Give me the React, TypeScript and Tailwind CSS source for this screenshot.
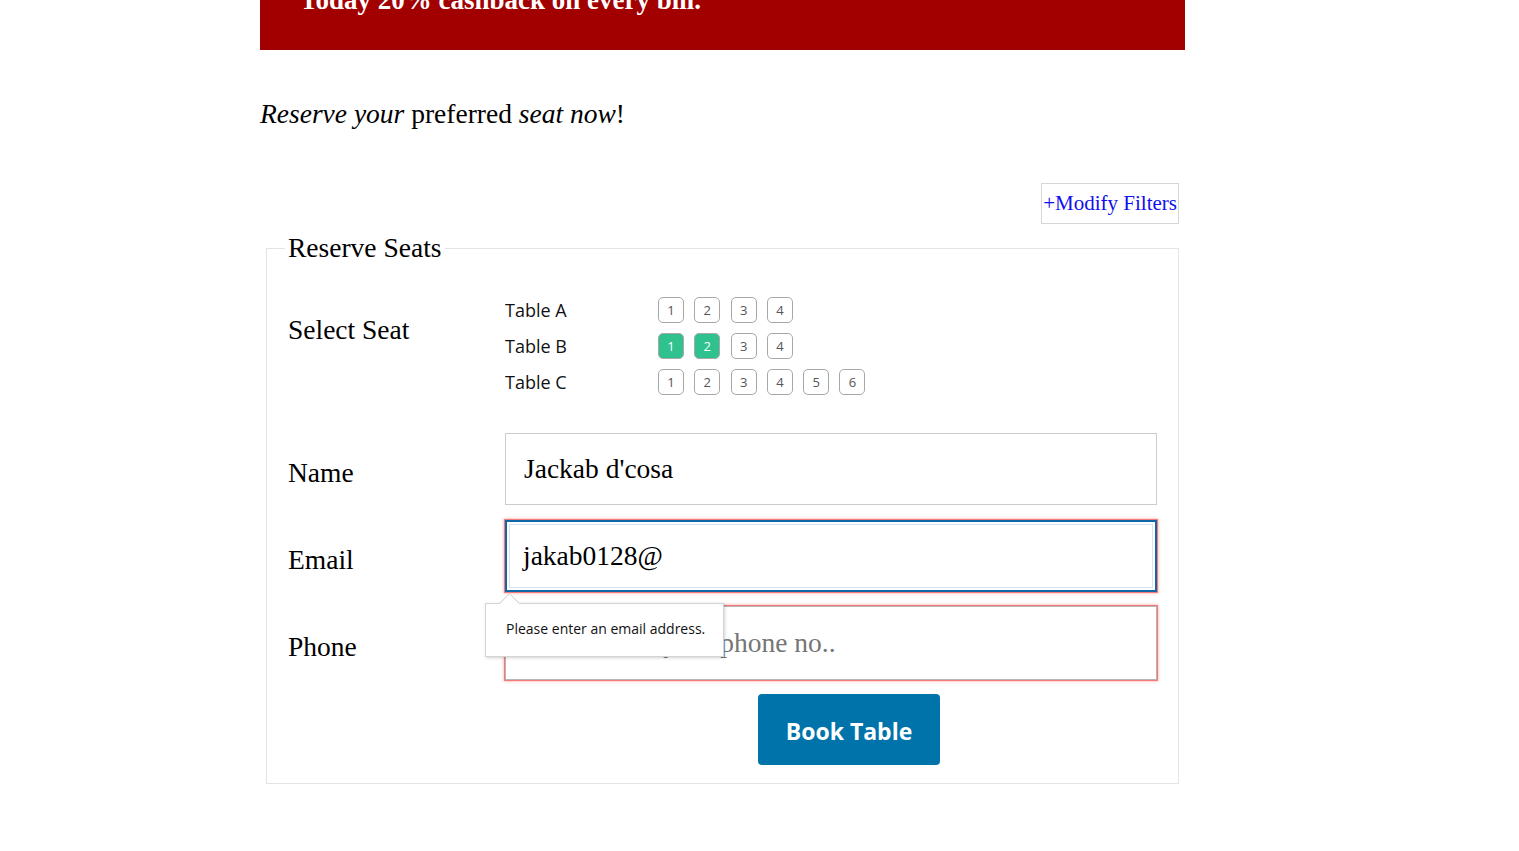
import React from 'react';

const serif = "font-['Liberation_Serif','Times_New_Roman',serif]";
const sans = "font-['Open_Sans','Noto_Sans',sans-serif]";

type Row = { name: string; seats: number; taken: number[] };

const tables: Row[] = [
  { name: 'Table A', seats: 4, taken: [] },
  { name: 'Table B', seats: 4, taken: [1, 2] },
  { name: 'Table C', seats: 6, taken: [] },
];

function Seat({ n, active }: { n: number; active: boolean }) {
  return (
    <button
      className={`w-[26px] h-[26px] mr-[10.3px] rounded-[5px] border border-[#a8a8a8] text-[13px] leading-none flex items-center justify-center ${sans} ${
        active ? 'bg-[#2fc28f] text-white' : 'bg-white text-[#555]'
      }`}
    >
      {n}
    </button>
  );
}

function FieldLabel({ children }: { children: React.ReactNode }) {
  return (
    <div className={`w-[217px] shrink-0 pt-[8px] text-[27.5px] leading-[32px] text-black ${serif}`}>{children}</div>
  );
}

export default function App() {
  return (
    <div className="min-h-screen bg-white">
      <div className="w-[925px] ml-[260px]">
        <div className="h-[50px] bg-[#a20000] overflow-hidden">
          <div className={`-mt-[16px] pl-[40px] text-[27px] leading-[32px] font-bold text-white ${serif}`}>
            Today 20% cashback on every bill.
          </div>
        </div>

        <p className={`mt-[48px] text-[27.5px] leading-[32px] text-black ${serif}`}>
          <i>Reserve your</i> preferred <i>seat now</i>!
        </p>

        <div className="mt-[53px] flex justify-end pr-[6px]">
          <button
            className={`h-[41px] border border-[#d6d6d6] px-px text-[21px] leading-none text-[#1010ee] ${serif}`}
          >
            +Modify Filters
          </button>
        </div>

        <fieldset className="mt-[8px] mx-[6px] border border-[#e3e3e3] px-[21px] pt-[28px] pb-[18px]">
          <legend className={`-ml-[3px] px-[3px] text-[27.5px] leading-[32px] text-black ${serif}`}>
            Reserve Seats
          </legend>

          <div className="flex">
            <div className={`w-[217px] shrink-0 pt-[22px] text-[27.5px] leading-[32px] text-black ${serif}`}>
              Select Seat
            </div>
            <div className="flex flex-col">
              {tables.map((t) => (
                <div key={t.name} className="h-[36px] flex items-center">
                  <span className={`w-[153px] text-[18px] text-[#111] ${sans}`}>{t.name}</span>
                  <div className="flex">
                    {Array.from({ length: t.seats }, (_, i) => (
                      <Seat key={i} n={i + 1} active={t.taken.includes(i + 1)} />
                    ))}
                  </div>
                </div>
              ))}
            </div>
          </div>

          <div className="mt-[33px] flex items-center">
            <FieldLabel>Name</FieldLabel>
            <div className="flex-1 h-[72px] border border-[#cccccc] flex items-center pl-[18px]">
              <span className={`text-[27.5px] text-black ${serif}`}>Jackab d'cosa</span>
            </div>
          </div>

          <div className="mt-[15px] flex items-center">
            <FieldLabel>Email</FieldLabel>
            <div className="relative flex-1 h-[72px] border-2 border-[#0f67a6] shadow-[0_0_0_1px_#f47a7a,0_0_3px_1px_#f8a0a0] p-[2px]">
              <div className="h-full border border-[#d4e4f3] flex items-center pl-[13px]">
                <span className={`text-[27.5px] text-black ${serif}`}>jakab0128@</span>
              </div>

              {/* validation bubble */}
              <div className="absolute left-[-22px] top-[81px] z-10 w-[239px] h-[54px] bg-white border border-[#d4d4d4] shadow-[1px_1px_3px_rgba(0,0,0,0.18)] flex items-center pl-[20px]">
                <div className="absolute -top-[8px] left-[16px] w-[15px] h-[15px] rotate-45 bg-white border-l border-t border-[#d4d4d4]" />
                <span className={`relative -top-[2px] text-[14px] text-[#111] ${sans}`}>Please enter an email address.</span>
              </div>
            </div>
          </div>

          <div className="mt-[14px] flex items-center">
            <FieldLabel>Phone</FieldLabel>
            <div className="flex-1 h-[74px] border border-[#b5b5b5] shadow-[0_0_0_1px_#f47a7a,0_0_3px_1px_#f8a0a0] flex items-center pl-[18px]">
              <span className={`text-[27.5px] text-[#757575] ${serif}`}>Please enter your phone no..</span>
            </div>
          </div>

          <div className="mt-[14px] pl-[470px]">
            <button
              className={`w-[182px] h-[71px] rounded-[4px] bg-[#0073aa] text-white text-[23px] font-bold ${sans}`}
            >
              <span className="relative top-[2px]">Book Table</span>
            </button>
          </div>
        </fieldset>
      </div>
    </div>
  );
}
